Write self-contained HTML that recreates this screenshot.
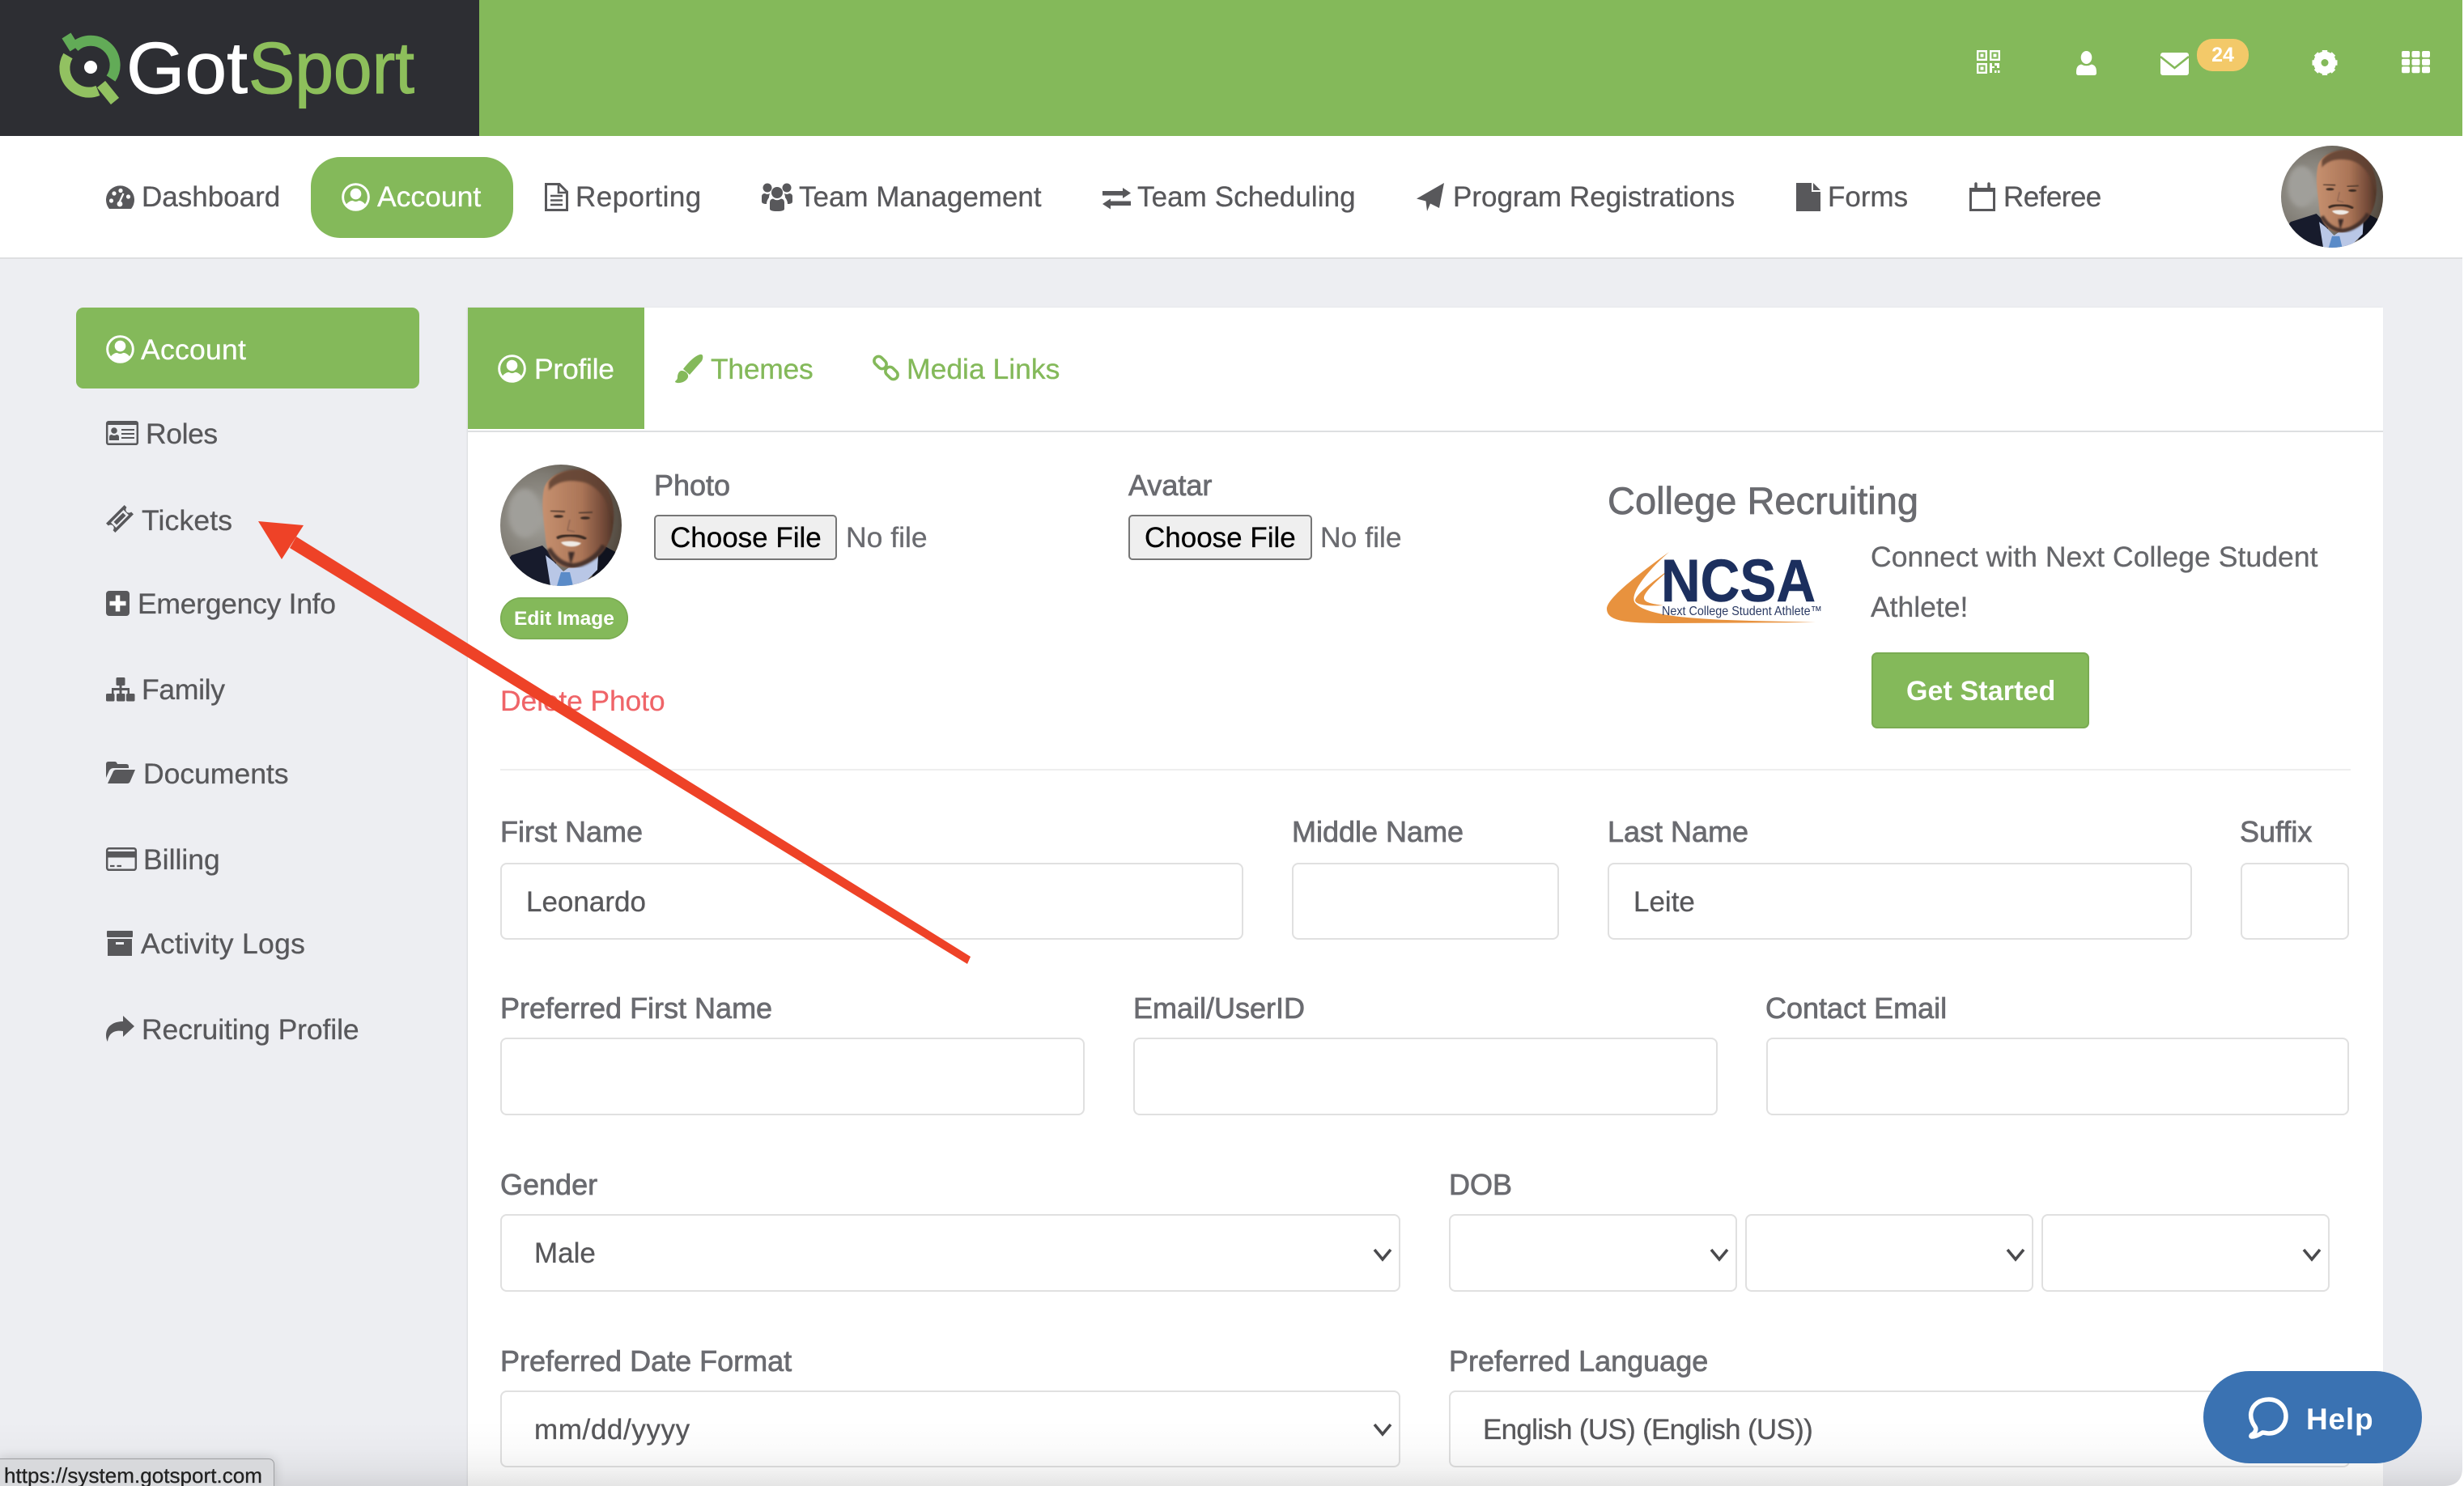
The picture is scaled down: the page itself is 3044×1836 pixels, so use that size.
<!DOCTYPE html>
<html lang="en"><head><meta charset="utf-8"><title>GotSport Account</title>
<style>
html,body{margin:0;padding:0;width:3044px;height:1836px;overflow:hidden;background:#edeef2}
body{position:relative;font-family:"Liberation Sans",Arial,sans-serif;font-size:35.5px;color:#58585b}
.a{position:absolute}
.t{position:absolute;white-space:nowrap;line-height:1;font-size:35.5px;margin-top:2px;-webkit-text-stroke:.3px currentColor}
.n{font-size:35px;color:#58585b;margin-top:0}
.l{color:#6a6b70;font-size:36px;margin-top:1px;-webkit-text-stroke:.75px #6a6b70}
.w{color:#fff;-webkit-text-stroke:.3px #fff}
.g{color:#84b95a;-webkit-text-stroke:.3px #84b95a}
.i{position:absolute;box-sizing:border-box;border:2.5px solid #e0e0e0;border-radius:8px;background:#fff}
.b{position:absolute;box-sizing:border-box;background:#efefef;border:2.5px solid #767676;border-radius:5px}
svg{position:absolute;left:0;top:0}
</style></head><body>

<div class="a" style="left:0;top:0;width:3044px;height:168px;background:#84b95a"></div>
<div class="a" style="left:0;top:0;width:592px;height:168px;background:#2d2e33"></div>
<div class="a" style="left:0;top:168px;width:3044px;height:150px;background:#fff;border-bottom:2px solid #dedfe1"></div>
<div class="a" style="left:384px;top:194px;width:250px;height:100px;background:#84b95a;border-radius:36px"></div>
<div class="a" style="left:94px;top:380px;width:424px;height:100px;background:#84b95a;border-radius:9px"></div>
<div class="a" style="left:578px;top:380px;width:2366px;height:1456px;background:#fff;box-shadow:-1px 0 2px rgba(0,0,0,.08)"></div>
<div class="a" style="left:578px;top:380px;width:218px;height:150px;background:#84b95a"></div>
<div class="a" style="left:578px;top:532px;width:2366px;height:2px;background:#dddfe1"></div>
<div class="a" style="left:618px;top:950px;width:2286px;height:2px;background:#eeeeee"></div>

<!-- top nav -->
<span class="t n" style="left:175px;top:226px">Dashboard</span>
<span class="t n" style="left:466px;top:226px;font-size:35.5px;color:#fff;-webkit-text-stroke:.3px #fff">Account</span>
<span class="t n" style="left:711px;top:226px;letter-spacing:.43px">Reporting</span>
<span class="t n" style="left:987px;top:226px">Team Management</span>
<span class="t n" style="left:1405px;top:226px;letter-spacing:.08px">Team Scheduling</span>
<span class="t n" style="left:1795px;top:226px">Program Registrations</span>
<span class="t n" style="left:2258px;top:226px">Forms</span>
<span class="t n" style="left:2475px;top:226px;letter-spacing:-.55px">Referee</span>

<!-- sidebar -->
<span class="t w" style="left:174px;top:413px;letter-spacing:.27px">Account</span>
<span class="t" style="left:180px;top:517px;letter-spacing:-.4px">Roles</span>
<span class="t" style="left:175px;top:624px;letter-spacing:.15px">Tickets</span>
<span class="t" style="left:170px;top:727px;letter-spacing:-.28px">Emergency Info</span>
<span class="t" style="left:175px;top:833px;letter-spacing:-.3px">Family</span>
<span class="t" style="left:177px;top:937px">Documents</span>
<span class="t" style="left:177px;top:1043px">Billing</span>
<span class="t" style="left:174px;top:1147px;letter-spacing:.3px">Activity Logs</span>
<span class="t" style="left:175px;top:1253px;letter-spacing:-.1px">Recruiting Profile</span>

<!-- tabs -->
<span class="t w" style="left:660px;top:437px;letter-spacing:-.27px">Profile</span>
<span class="t g" style="left:878px;top:437px;letter-spacing:-.3px">Themes</span>
<span class="t g" style="left:1120px;top:437px">Media Links</span>

<!-- photo -->
<span class="t l" style="left:808px;top:581px">Photo</span>
<div class="b" style="left:808px;top:636px;width:226px;height:56px"></div>
<span class="t" style="left:828px;top:645px;color:#000;font-size:35px">Choose File</span>
<span class="t" style="left:1045px;top:645px;color:#6a6b70">No file</span>
<span class="t l" style="left:1394px;top:581px">Avatar</span>
<div class="b" style="left:1394px;top:636px;width:227px;height:56px"></div>
<span class="t" style="left:1414px;top:645px;color:#000;font-size:35px">Choose File</span>
<span class="t" style="left:1631px;top:645px;color:#6a6b70">No file</span>
<div class="a" style="left:618px;top:738px;width:158px;height:52px;border-radius:26px;background:#84b95a;box-shadow:inset 0 0 0 1.5px #7aab52"></div>
<span class="t" style="left:635px;top:751px;color:#fff;font-size:24.5px;font-weight:700;-webkit-text-stroke:0">Edit Image</span>
<span class="t" style="left:618px;top:847px;color:#ef6468;letter-spacing:-.15px;-webkit-text-stroke:.2px #ef6468">Delete Photo</span>

<!-- recruiting -->
<span class="t l" style="left:1986px;top:594px;font-size:47px">College Recruiting</span>
<span class="t" style="left:2311px;top:669px;color:#66676b;letter-spacing:.06px">Connect with Next College Student</span>
<span class="t" style="left:2311px;top:731px;color:#66676b">Athlete!</span>
<div class="a" style="left:2312px;top:806px;width:269px;height:94px;box-sizing:border-box;background:#84b95a;border:2px solid #7aab52;border-radius:7px"></div>
<span class="t" style="left:2355px;top:835px;color:#fff;font-size:34px;font-weight:700;-webkit-text-stroke:0;letter-spacing:.1px">Get Started</span>

<!-- form row 1 -->
<span class="t l" style="left:618px;top:1009px">First Name</span>
<span class="t l" style="left:1596px;top:1009px">Middle Name</span>
<span class="t l" style="left:1986px;top:1009px">Last Name</span>
<span class="t l" style="left:2767px;top:1009px">Suffix</span>
<div class="i" style="left:618px;top:1066px;width:918px;height:95px"></div>
<div class="i" style="left:1596px;top:1066px;width:330px;height:95px"></div>
<div class="i" style="left:1986px;top:1066px;width:722px;height:95px"></div>
<div class="i" style="left:2768px;top:1066px;width:134px;height:95px"></div>
<span class="t" style="left:650px;top:1095px;font-size:35px">Leonardo</span>
<span class="t" style="left:2018px;top:1095px;font-size:35px">Leite</span>

<!-- form row 2 -->
<span class="t l" style="left:618px;top:1227px">Preferred First Name</span>
<span class="t l" style="left:1400px;top:1227px">Email/UserID</span>
<span class="t l" style="left:2181px;top:1227px">Contact Email</span>
<div class="i" style="left:618px;top:1282px;width:722px;height:96px"></div>
<div class="i" style="left:1400px;top:1282px;width:722px;height:96px"></div>
<div class="i" style="left:2182px;top:1282px;width:720px;height:96px"></div>

<!-- form row 3 -->
<span class="t l" style="left:618px;top:1445px">Gender</span>
<span class="t l" style="left:1790px;top:1445px">DOB</span>
<div class="i" style="left:618px;top:1500px;width:1112px;height:96px"></div>
<div class="i" style="left:1790px;top:1500px;width:356px;height:96px"></div>
<div class="i" style="left:2156px;top:1500px;width:356px;height:96px"></div>
<div class="i" style="left:2522px;top:1500px;width:356px;height:96px"></div>
<span class="t" style="left:660px;top:1529px;font-size:35px">Male</span>

<!-- form row 4 -->
<span class="t l" style="left:618px;top:1663px">Preferred Date Format</span>
<span class="t l" style="left:1790px;top:1663px">Preferred Language</span>
<div class="i" style="left:618px;top:1718px;width:1112px;height:95px"></div>
<div class="i" style="left:1790px;top:1718px;width:1113px;height:95px"></div>
<span class="t" style="left:660px;top:1747px;font-size:35px;letter-spacing:.6px">mm/dd/yyyy</span>
<span class="t" style="left:1832px;top:1747px;font-size:35px;letter-spacing:-.7px">English (US) (English (US))</span>

<!-- icons, logos -->
<svg width="3044" height="1836" viewBox="0 0 3044 1836">
<defs>
<symbol id="uc" viewBox="0 0 36 36">
<circle cx="18" cy="18" r="16.3" fill="none" stroke="currentColor" stroke-width="3"/>
<circle cx="18" cy="14" r="7" fill="currentColor"/>
<path d="M5.5 28C8 24 12 22.5 14 22.5Q18 25 22 22.5C24 22.5 28 24 30.500 28A16 16 0 0 1 5.500 28Z" fill="currentColor"/>
</symbol>
<radialGradient id="bgp" cx=".3" cy=".45" r=".75"><stop offset="0" stop-color="#a3a29c"/><stop offset=".5" stop-color="#7f7b73"/><stop offset="1" stop-color="#4c4237"/></radialGradient>
<linearGradient id="skin" x1="0" y1="0" x2="1" y2="0"><stop offset="0" stop-color="#c6906f"/><stop offset=".55" stop-color="#ab7557"/><stop offset=".85" stop-color="#754b39"/><stop offset="1" stop-color="#4f3528"/></linearGradient>
<clipPath id="cc"><circle cx="75" cy="75" r="75"/></clipPath>
<filter id="bl"><feGaussianBlur stdDeviation="3"/></filter>
<filter id="bl1"><feGaussianBlur stdDeviation="1.3"/></filter>
<filter id="bl2"><feGaussianBlur stdDeviation=".7"/></filter>
<symbol id="man" viewBox="0 0 150 150">
<g clip-path="url(#cc)">
<rect width="150" height="150" fill="url(#bgp)"/>
<ellipse cx="30" cy="60" rx="20" ry="30" fill="#a09f9a" filter="url(#bl)"/>
<path d="M0 130L14 112L52 100L70 118L62 150H0Z" fill="#171b2c"/>
<path d="M120 96L150 112V150H112Z" fill="#10131f"/>
<path d="M56 112L66 120L78 132L98 118L122 96L120 130L100 150H62Z" fill="#b9c7e6"/>
<path d="M75 133L86 133L90 150H70Z" fill="#5a8bc8"/>
<path d="M54 30C60 8 92 3 112 10C130 18 140 40 140 65C140 95 128 118 92 127C72 130 58 116 56 92C54 70 50 50 54 30Z" fill="url(#skin)" filter="url(#bl2)"/>
<path d="M60 22C70 6 100 0 118 12C134 24 142 50 140 72C136 50 124 28 104 22C86 18 70 20 60 32Z" fill="#5d3f30" opacity=".85" filter="url(#bl1)"/>
<path d="M60 104C68 118 78 124 90 125C104 124 120 114 128 100" fill="none" stroke="#3a2c26" stroke-width="6" opacity=".85" filter="url(#bl1)"/>
<path d="M84 108L87 124L92 108Z" fill="#2e2420" opacity=".9" filter="url(#bl1)"/>
<path d="M70 91C78 86 96 86 106 92" fill="none" stroke="#3a2a23" stroke-width="3.500" filter="url(#bl2)"/>
<path d="M75 96C81 94 93 94 100 97C96 103 79 103 75 96Z" fill="#efebe6" filter="url(#bl2)"/>
<ellipse cx="72" cy="64" rx="6" ry="1.800" fill="#3a2a22" filter="url(#bl2)"/>
<ellipse cx="105" cy="66" rx="6" ry="1.800" fill="#3a2a22" filter="url(#bl2)"/>
<path d="M62 57L80 58M97 60L114 59" stroke="#5a3f30" stroke-width="2.200" fill="none" filter="url(#bl2)"/>
<path d="M86 68L83 81L92 83" stroke="#8f6450" stroke-width="1.600" fill="none" filter="url(#bl2)"/>
</g>
</symbol>
</defs>

<!-- GotSport logo -->
<g fill="none" stroke-width="13">
<path d="M92 60L82 44" stroke="#62ab57"/>
<path d="M92 58A30 30 0 0 1 137 97" stroke="#62ab57"/>
<path d="M84 69A30 30 0 0 0 121 112" stroke="#92c161"/>
<path d="M125 104L142 125" stroke="#92c161"/>
</g>
<circle cx="112" cy="83" r="8" fill="#fff"/>
<text x="156" y="115" font-size="90" fill="#fff" stroke="#fff" stroke-width=".9" textLength="150" lengthAdjust="spacingAndGlyphs" font-family="Liberation Sans">Got</text>
<text x="307" y="115" font-size="90" fill="#8dbf5b" stroke="#8dbf5b" stroke-width="1.200" textLength="205" lengthAdjust="spacingAndGlyphs" font-family="Liberation Sans">Sport</text>

<!-- top right icons -->
<g fill="none" stroke="#fff" stroke-width="2.4">
<rect x="2443.2" y="63.2" width="10.6" height="10.6"/><rect x="2459.2" y="63.2" width="10.6" height="10.6"/><rect x="2443.2" y="79.2" width="10.6" height="10.6"/>
</g>
<g fill="#fff">
<rect x="2446.5" y="66.5" width="4" height="4"/><rect x="2462.5" y="66.5" width="4" height="4"/><rect x="2446.5" y="82.5" width="4" height="4"/>
<path d="M2458 78h3v4h3v-4h6v6h-3v-3h-3v3h-3v6h-3zM2464 87h2.5v3H2464zM2468 87h2.5v3H2468z"/>
<ellipse cx="2577.5" cy="71" rx="6.8" ry="8"/>
<path d="M2565 90C2565 84 2566 81 2571 79.5Q2577.5 83 2584 79.5C2589 81 2590 84 2590 90Q2590 93 2587 93H2568Q2565 93 2565 90Z"/>
<rect x="2669" y="65" width="35" height="28" rx="3"/>
<rect x="2967" y="63" width="10" height="8" rx="2"/><rect x="2979.5" y="63" width="10" height="8" rx="2"/><rect x="2992" y="63" width="10" height="8" rx="2"/>
<rect x="2967" y="72.7" width="10" height="8" rx="2"/><rect x="2979.5" y="72.7" width="10" height="8" rx="2"/><rect x="2992" y="72.7" width="10" height="8" rx="2"/>
<rect x="2967" y="82.2" width="10" height="8" rx="2"/><rect x="2979.5" y="82.2" width="10" height="8" rx="2"/><rect x="2992" y="82.2" width="10" height="8" rx="2"/>
</g>
<path d="M2669 70L2686.5 84L2704 70" fill="none" stroke="#84b95a" stroke-width="2.6"/>
<g transform="translate(2872 77.5)" fill="#fff">
<circle r="9.2" fill="none" stroke="#fff" stroke-width="9.4"/>
<rect x="-3.200" y="-15.500" width="6.400" height="6"/><rect x="-3.200" y="-15.500" width="6.400" height="6" transform="rotate(45)"/><rect x="-3.200" y="-15.500" width="6.400" height="6" transform="rotate(90)"/><rect x="-3.200" y="-15.500" width="6.400" height="6" transform="rotate(135)"/><rect x="-3.200" y="-15.500" width="6.400" height="6" transform="rotate(180)"/><rect x="-3.200" y="-15.500" width="6.400" height="6" transform="rotate(225)"/><rect x="-3.200" y="-15.500" width="6.400" height="6" transform="rotate(270)"/><rect x="-3.200" y="-15.500" width="6.400" height="6" transform="rotate(315)"/>
</g>
<rect x="2714" y="48" width="64" height="40" rx="19" fill="#f3c969"/>
<text x="2746" y="76" font-size="25" font-weight="700" fill="#fff" text-anchor="middle" font-family="Liberation Sans">24</text>

<!-- nav icons -->
<g fill="#58585b">
<path d="M135 258A17.5 17.5 0 1 1 162 258Z"/>
<g fill="#fff"><circle cx="137.5" cy="248" r="2.6"/><circle cx="141" cy="239" r="2.6"/><circle cx="149" cy="235.5" r="2.6"/><circle cx="158.5" cy="243" r="2.6"/><circle cx="148" cy="252" r="3.4"/></g>
<path d="M147 251L152.5 239" stroke="#fff" stroke-width="2.2"/>
</g>
<use href="#uc" x="422" y="226" width="35" height="35" color="#fff"/>
<path d="M674.5 227.5H691L700.5 237V259.5H674.5Z" fill="none" stroke="#58585b" stroke-width="3"/>
<path d="M690 228V238H700M680 242H695M680 247.5H695M680 253H695" fill="none" stroke="#58585b" stroke-width="2.6"/>
<g fill="#58585b">
<circle cx="960" cy="238" r="7"/><circle cx="948" cy="232" r="5.500"/><circle cx="972" cy="232" r="5.500"/>
<path d="M951 250Q951 246 955 245.500Q960 249 965 245.500Q969 246 969 250V258Q969 261 960 261Q951 261 951 258Z"/>
<path d="M941 243Q941 239 945 239Q948 241 951 239Q950 242 950 244Q947 248 947 252Q941 252 941 249Z"/>
<path d="M979 243Q979 239 975 239Q972 241 969 239Q970 242 970 244Q973 248 973 252Q979 252 979 249Z"/>
<path d="M1362 236H1387V232L1397 238.500L1387 245V241.500H1362Z"/>
<path d="M1397 248.500H1372V245.500L1362 252L1372 258.500V254H1397Z"/>
<path d="M1784 226L1778 257L1767 251.500L1763 261L1761.500 248.500L1750 245.500Z"/>
<path d="M2219 226H2238V237H2249V261H2219ZM2240 226L2249 235H2240Z"/>
</g>
<path d="M2434.500 233.500H2463.500V259.500H2434.500Z" fill="none" stroke="#58585b" stroke-width="3"/>
<path d="M2434 232H2464V237H2434Z" fill="#58585b"/>
<path d="M2441 227V234M2457 227V234" stroke="#58585b" stroke-width="3.500" stroke-linecap="round"/>
<use href="#man" x="2818" y="180" width="126" height="126"/>

<!-- sidebar icons -->
<use href="#uc" x="131" y="414" width="35" height="35" color="#fff"/>
<rect x="132.200" y="521.200" width="37.600" height="27.600" rx="2" fill="none" stroke="#58585b" stroke-width="2.500"/>
<g fill="#58585b">
<rect x="132" y="521" width="38" height="4"/>
<circle cx="141" cy="532" r="3.800"/>
<path d="M135 544V540Q135 537 138 537Q141 539 144 537Q147 537 147 540V544Z"/>
<rect x="150" y="530" width="16" height="2"/><rect x="150" y="535" width="16" height="2"/><rect x="150" y="540" width="16" height="2"/>
</g>
<g transform="rotate(-45 148 641)">
<path d="M132 633H164V637A4 4 0 0 0 164 645V649H132V645A4 4 0 0 0 132 637Z" fill="#58585b"/>
<rect x="137" y="636.500" width="22" height="9" fill="#edeef2"/>
<rect x="140" y="638.500" width="16" height="5" fill="#58585b"/>
</g>
<rect x="131" y="730" width="29" height="31" rx="4" fill="#58585b"/>
<path d="M145.500 735.500V755.500M135.500 745.500H155.500" stroke="#fff" stroke-width="5.500"/>
<g fill="#58585b">
<rect x="143.500" y="837" width="11" height="10" rx="1.500"/>
<path d="M147.500 846H150.500V850H160V857H157.500V853H150.500V857H147.500V853H140.500V857H138V850H147.500Z"/>
<rect x="131" y="857" width="10.500" height="9.500" rx="1.500"/><rect x="144" y="857" width="10.500" height="9.500" rx="1.500"/><rect x="156" y="857" width="10.500" height="9.500" rx="1.500"/>
<path d="M131 944Q131 941 134 941H142Q144 941 145 944H156Q159 944 159 947V949H140Q137 949 135 952L131 961Z"/>
<path d="M133 968L140 953Q141 951 144 951H167L161 965Q160 968 157 968Z"/>
<rect x="132" y="1150" width="32" height="8" rx="1"/>
<path d="M133 1160H163V1181H133ZM143 1164V1167H153V1164Z" fill-rule="evenodd"/>
<path d="M166 1268L152 1255V1262C140 1262 131 1268 131 1279Q131 1284 133 1287C134 1277 141 1272 152 1274V1281Z"/>
</g>
<rect x="132.200" y="1048.200" width="35.600" height="26.600" rx="2.500" fill="none" stroke="#58585b" stroke-width="2.500"/>
<rect x="132" y="1052" width="36" height="7.500" fill="#58585b"/>
<path d="M136 1070H141.500M144.500 1070H150" stroke="#58585b" stroke-width="2.200"/>

<!-- tab icons -->
<use href="#uc" x="615" y="438" width="35" height="35" color="#fff"/>
<g fill="#84b95a">
<path d="M865 438C869 437 869 442 867 446L852 463L844 456C850 448 859 439 865 438Z"/>
<path d="M842 458C847 458 851 462 850 466C848 472 838 475 834 472C834 470 837 470 837 466C837 462 839 458 842 458Z"/>
</g>
<g fill="none" stroke="#84b95a" stroke-width="3.600">
<rect x="1079" y="442.500" width="17" height="11" rx="5.500" transform="rotate(45 1087.500 448)"/>
<rect x="1093" y="455.500" width="17" height="11" rx="5.500" transform="rotate(45 1101.500 461)"/>
</g>
<use href="#man" x="618" y="574" width="150" height="150"/>

<!-- NCSA -->
<path d="M2062 682C2020 712 1985 740 1985 752C1985 768 2010 770 2060 770L2243 769C2150 766 2040 768 2020 745C2012 735 2035 705 2062 682Z" fill="#e8923e"/>
<path d="M2067 700C2040 720 2020 735 2020 742C2021 748 2040 749 2055 748C2040 746 2030 744 2031 738C2032 730 2050 715 2067 700Z" fill="#e8923e"/>
<text x="2052" y="743" font-size="74" font-weight="700" fill="#1c2f5e" stroke="#1c2f5e" stroke-width=".6" textLength="191" lengthAdjust="spacingAndGlyphs" font-family="Liberation Sans">NCSA</text>
<text x="2053" y="760" font-size="16" fill="#2b3a63" textLength="198" lengthAdjust="spacingAndGlyphs" font-family="Liberation Sans">Next College Student Athlete™</text>

<!-- select chevrons -->
<g fill="none" stroke="#4a4a4d" stroke-width="3.600">
<path d="M1698 1544L1708 1556L1718 1544M1698 1760L1708 1772L1718 1760"/>
<path d="M2114 1544L2124 1556L2134 1544M2480 1544L2490 1556L2500 1544M2846 1544L2856 1556L2866 1544"/>
</g>

<!-- arrow -->
<path d="M319 644L375 649L348 691Z" fill="#ee4227"/>
<path d="M358 677L366 663L1199 1182L1195 1191Z" fill="#ee4227"/>
</svg>

<!-- bottom gradient -->
<div class="a" style="left:0;top:1756px;width:3044px;height:80px;background:linear-gradient(to bottom,rgba(0,0,0,0) 0%,rgba(0,0,0,.015) 40%,rgba(0,0,0,.05) 75%,rgba(0,0,0,.1) 100%)"></div>

<!-- status bar -->
<div class="a" style="left:0;top:1802px;width:339px;height:34px;box-sizing:border-box;background:#d8d9dc;border:1.500px solid #9e9fa2;border-left:0;border-bottom:0;border-top-right-radius:7px;box-shadow:0 0 14px rgba(0,0,0,.16);overflow:hidden"></div>
<span class="t" style="left:5px;top:1810px;margin-top:0;font-size:26px;letter-spacing:.04px;color:#222">https://system.gotsport.com</span>

<!-- help -->
<div class="a" style="left:2722px;top:1694px;width:270px;height:114px;border-radius:57px;background:#3a72b2"></div>
<span class="t" style="left:2849px;top:1735px;margin-top:0;font-size:37px;font-weight:700;color:#fff;letter-spacing:.8px;-webkit-text-stroke:0">Help</span>
<svg width="3044" height="1836" viewBox="0 0 3044 1836">
<path d="M2786 1763C2781 1756 2780 1750 2781 1745C2783 1735 2792 1729 2803 1729C2815 1729 2824 1738 2824 1750C2824 1762 2814 1771 2803 1771C2800 1771 2798 1770 2795 1770C2792 1772 2787 1775 2782 1775C2780 1775 2781 1773 2783 1772C2786 1770 2788 1766 2786 1763Z" fill="none" stroke="#fff" stroke-width="5.500" stroke-linejoin="round"/>
<path d="M3042 0H3044V1836H3020C3034 1836 3042 1828 3042 1814Z" fill="#fff"/>
</svg>
</body></html>
